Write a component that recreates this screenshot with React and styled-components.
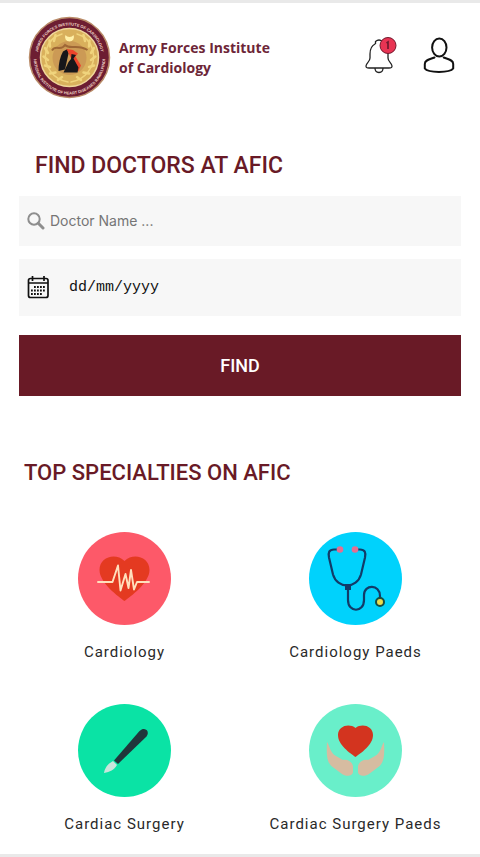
import React from "react";
import styled, { createGlobalStyle } from "styled-components";

const maroon = "#691a26";

const GlobalStyle = createGlobalStyle`
  *, *::before, *::after { box-sizing: border-box; }
  body { margin: 0; background: #fff; font-family: Roboto, "Liberation Sans", sans-serif; }
`;

const Page = styled.div`
  min-height: 100vh;
  border-top: 3px solid #e9e9e9;
  border-bottom: 3px solid #e9e9e9;
  background: #fff;
`;

const Header = styled.header`
  display: flex;
  align-items: center;
  padding: 13px 25px 0 28px;
`;

const Brand = styled.a`
  display: flex;
  align-items: center;
  gap: 8px;
  margin-right: auto;
  color: #6d2638;
  text-decoration: none;
`;

const BrandName = styled.span`
  font: 700 14px/20px "Open Sans", "Noto Sans", sans-serif;
`;

const Actions = styled.nav`
  display: flex;
  align-items: center;
  gap: 26px;
  margin-bottom: 6px;
`;

const IconButton = styled.button`
  display: block;
  padding: 0;
  border: 0;
  background: none;
  color: #111;
  cursor: pointer;
  svg { display: block; }
`;

const Heading = styled.h2`
  margin: 0;
  padding-left: ${(p) => p.$indent}px;
  color: ${maroon};
  font-size: ${(p) => p.$size}px;
  font-weight: 500;
  line-height: 34px;
`;

const SearchForm = styled.form`
  display: flex;
  flex-direction: column;
  padding: 50px 19px 0;
`;

const Field = styled.label`
  display: flex;
  align-items: center;
  gap: ${(p) => p.$gap}px;
  height: ${(p) => p.$height}px;
  margin-top: 13px;
  padding: 0 8px;
  background: #f7f7f7;
  svg { flex: none; }
`;

const TextInput = styled.input`
  flex: 1;
  min-width: 0;
  padding: 0;
  border: 0;
  outline: 0;
  background: none;
  color: #222;
  font: 400 14px/20px Inter, sans-serif;
  &::placeholder { color: #757575; opacity: 1; }
`;

const DateInput = styled(TextInput)`
  font: 400 15px/20px "Liberation Mono", monospace;
  &::placeholder { color: #111; }
`;

const FindButton = styled.button`
  height: 61px;
  margin-top: 19px;
  border: 0;
  background: ${maroon};
  color: #fff;
  font: 500 18px/24px Roboto, sans-serif;
  cursor: pointer;
`;

const Specialties = styled.section`
  padding-top: 60px;
`;

const SpecialtyGrid = styled.div`
  display: grid;
  grid-template-columns: repeat(2, 1fr);
  row-gap: 40px;
  padding: 42px 9px 16px;
`;

const Specialty = styled.a`
  display: flex;
  flex-direction: column;
  align-items: center;
  gap: 15px;
  color: #292929;
  font-size: 15px;
  line-height: 24px;
  letter-spacing: 1px;
  text-decoration: none;
`;

const Disc = styled.span`
  width: 93px;
  height: 93px;
  border-radius: 50%;
  background: ${(p) => p.$color};
  svg { display: block; }
`;

const SealText = styled.text`
  fill: #f0d5c8;
  font: 700 ${(p) => p.$size}px "Liberation Sans", sans-serif;
`;

function Seal() {
  return (
    <svg width="83" height="83" viewBox="0 0 166 166" role="img" aria-label="AFIC seal">
      <defs>
        <path id="sealTop" d="M19 83A64 64 0 0 1 147 83" />
        <path id="sealBottom" d="M12 77A71.500 71.500 0 1 0 154 77" />
      </defs>
      <circle cx="83" cy="83" r="80" fill="#6d1d32" stroke="#b98b68" strokeWidth="3" />
      <circle cx="83" cy="83" r="58" fill="#d9b05c" stroke="#efd69a" strokeWidth="3" />
      <g fill="none" stroke="#f0d47d" strokeLinecap="round">
        <path d="M68 36C35 45 25 86 46 112q12 16 34 20M98 36c33 9 43 50 22 76q-12 16-34 20" strokeWidth="3" />
        <path d="M55 38l-3 12M43 49l1 12M34 64l6 10M31 81l9 7M34 99l10 3M44 115l11-2M60 128l8-6M111 38l3 12M123 49l-1 12M132 64l-6 10M135 81l-9 7M132 99l-10 3M122 115l-11-2M106 128l-8-6" strokeWidth="5" />
      </g>
      <circle cx="83" cy="84" r="34" fill="#cc9a55" />
      <path d="M75 38a9 9 0 1 0 16 0a9 7 0 0 1-16 0z" fill="#fff0a8" />
      <path d="M48 69c8-13 17 3 26-11 10 10 25-3 45 10" fill="none" stroke="#9f6735" strokeWidth="4" />
      <path d="M70 71l9-5 2 9-7 32-13 3c0-15 3-28 9-39z" fill="#17161a" />
      <path d="M77 66l13 2 10 7-5 6 11 18-5 11-21-2 7-22z" fill="#ed452b" />
      <path d="M87 76l9 2-5 7 10 18-2 10H71l10-21 5-6z" fill="#17161a" />
      <SealText $size={8}>
        <textPath href="#sealTop" startOffset="50%" textAnchor="middle">ARMED FORCES INSTITUTE OF CARDIOLOGY</textPath>
      </SealText>
      <SealText $size={8}>
        <textPath href="#sealBottom" startOffset="50%" textAnchor="middle">NATIONAL INSTITUTE OF HEART DISEASES RAWALPINDI</textPath>
      </SealText>
    </svg>
  );
}

function BellIcon() {
  return (
    <svg width="32" height="38" viewBox="0 0 32 38" fill="none" aria-hidden="true">
      <path d="M10 8C6 10 5 13 5 18v4c0 4-4 5-4 8 0 2 1 2 3 2h20c2 0 3 0 3-2 0-3-4-4-4-8v-6" stroke="#222" strokeWidth="1.3" strokeLinecap="round" />
      <path d="M10.500 8V5.500q3.500-3 7 0M10 32c0 6 8 6 8 0" stroke="#222" strokeWidth="1.3" />
      <circle cx="23" cy="9.500" r="8" fill="#e83453" stroke="#71192d" strokeWidth="1" />
      <path d="M21.500 7l1.500-1v7" stroke="#71192d" strokeWidth="1.7" />
    </svg>
  );
}

function PersonIcon() {
  return (
    <svg width="32" height="38" viewBox="0 0 32 38" fill="none" stroke="#111" strokeWidth="2" strokeLinecap="round" strokeLinejoin="round" aria-hidden="true">
      <ellipse cx="16.300" cy="11.500" rx="7.200" ry="9" />
      <path d="M11.500 21.500C7 23.500 1.800 23.500 1.800 28v4.500C5 37 27 37 30.200 32.500V28c0-4.500-5-4.500-9.500-6.500" />
    </svg>
  );
}

function SearchIcon() {
  return (
    <svg width="18" height="18" viewBox="0 0 18 18" fill="none" stroke="#8e8e8e" aria-hidden="true">
      <circle cx="7" cy="7" r="5.700" strokeWidth="2" />
      <path d="M11.300 11.300L16 16" strokeWidth="3" strokeLinecap="round" />
    </svg>
  );
}

function CalendarIcon() {
  return (
    <svg width="23" height="23" viewBox="0 0 23 23" fill="none" stroke="#111" aria-hidden="true">
      <rect x="1.500" y="2.500" width="19.500" height="19" rx="2" strokeWidth="1.700" />
      <path d="M2 7h19M5.500 0v5M17 0v5" strokeWidth="1.700" />
      <path d="M7 11h12M4 14.500h15M4 18h12" strokeWidth="1.800" strokeDasharray="1.800 1.200" />
    </svg>
  );
}

const heartRate = (
  <>
    <path d="M46.500 69C41 65 21.500 51 21.500 38c0-13 16-18 25-9 9-9 25-4 25 9 0 13-19.500 27-25 31z" fill="#e43a21" />
    <path d="M20 50h14.500L40 33.500l2.500 25L47.500 42l3 14L53 38l3 19.500 3-7.500h12" fill="none" stroke="#ffe0bd" strokeWidth="1.900" strokeLinejoin="round" strokeLinecap="round" />
  </>
);

const stethoscope = (
  <>
    <g fill="none" stroke="#123b68" strokeWidth="2.200" strokeLinecap="round">
      <path d="M29 17.500h-4c-5 0-6 3-5 8l4 17c2 7 8 11 14 11s12-4 14-11l4-17c1-5 0-8-5-8h-3" />
      <path d="M39 54v14c0 13 16 13 16 0V63c0-11 16-11 16 1v2" />
    </g>
    <rect x="36" y="52" width="6" height="6" fill="#123b68" />
    <circle cx="31" cy="17.500" r="3.300" fill="#e46e91" />
    <circle cx="46" cy="17.500" r="3.300" fill="#e46e91" />
    <circle cx="71" cy="70" r="4" fill="#e9dc4e" stroke="#164d40" strokeWidth="2" />
  </>
);

const scalpel = (
  <>
    <path d="M36 56.500L61.500 27c5-5 11 0 7 5.500L40 60z" fill="#20363b" />
    <path d="M35 57l4 4c-3 5-7 7-13 8 1-6 4-9 9-12z" fill="#c9e5dc" />
  </>
);

const hand = "M18 38c3 4 3 11 9 14l7 4c5-1 9 2 10 6v6c0 4-7 5-11 2l-8-6c-6-4-8-9-7-26z";

const hands = (
  <>
    <path d="M46.500 53C41 49 29 41 29 31c0-9 11-12 17.500-7C53 19 64 22 64 31c0 10-12 18-17.500 22z" fill="#d3341f" />
    <g fill="#d6bca1">
      <path d={hand} />
      <path d={hand} transform="matrix(-1 0 0 1 93 0)" />
    </g>
  </>
);

const specialties = [
  { name: "Cardiology", color: "#fd5969", art: heartRate },
  { name: "Cardiology Paeds", color: "#00d2fc", art: stethoscope },
  { name: "Cardiac Surgery", color: "#0ae3a5", art: scalpel },
  { name: "Cardiac Surgery Paeds", color: "#69efca", art: hands },
];

export default function App() {
  return (
    <>
      <GlobalStyle />
      <Page>
        <Header>
          <Brand href="#home">
            <Seal />
            <BrandName>Army Forces Institute<br />of Cardiology</BrandName>
          </Brand>
          <Actions>
            <IconButton aria-label="Notifications, 1 unread"><BellIcon /></IconButton>
            <IconButton aria-label="Profile"><PersonIcon /></IconButton>
          </Actions>
        </Header>
        <main>
          <SearchForm onSubmit={(e) => e.preventDefault()}>
            <Heading $indent={16} $size={23}>FIND DOCTORS AT AFIC</Heading>
            <Field $height={50} $gap={5}>
              <SearchIcon />
              <TextInput type="search" aria-label="Doctor name" placeholder="Doctor Name ..." />
            </Field>
            <Field $height={57} $gap={19}>
              <CalendarIcon />
              <DateInput type="text" inputMode="numeric" aria-label="Appointment date" placeholder="dd/mm/yyyy" />
            </Field>
            <FindButton type="submit">FIND</FindButton>
          </SearchForm>
          <Specialties>
            <Heading $indent={24} $size={22}>TOP SPECIALTIES ON AFIC</Heading>
            <SpecialtyGrid>
              {specialties.map((s) => (
                <Specialty key={s.name} href="#specialty">
                  <Disc $color={s.color}>
                    <svg width="93" height="93" viewBox="0 0 93 93" aria-hidden="true">{s.art}</svg>
                  </Disc>
                  {s.name}
                </Specialty>
              ))}
            </SpecialtyGrid>
          </Specialties>
        </main>
      </Page>
    </>
  );
}
